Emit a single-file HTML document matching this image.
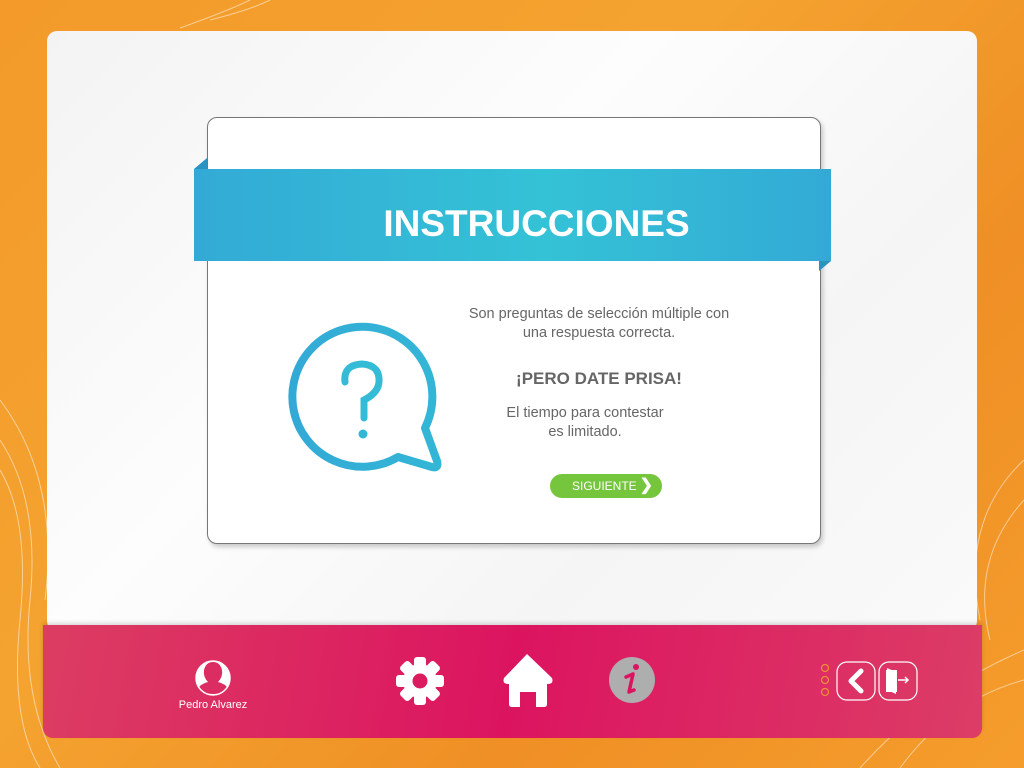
<!DOCTYPE html>
<html><head><meta charset="utf-8"><style>
body{margin:0;width:1024px;height:768px;overflow:hidden;font-family:"Liberation Sans",sans-serif;background:linear-gradient(135deg,#f39a2a 0%,#f4a330 40%,#ef8f25 70%,#f59d2c 100%);position:relative}
.panel{position:absolute;left:47px;top:31px;width:930px;height:600px;background:linear-gradient(135deg,#f3f3f3,#fdfdfd 40%,#f5f5f5 70%,#fafafa);border-radius:10px}
.card{position:absolute;left:207px;top:117px;width:612px;height:425px;background:#fff;border:1px solid #777;border-radius:10px;box-shadow:2px 3px 5px rgba(0,0,0,.2)}
.rib{position:absolute;left:194px;top:169px;width:637px;height:92px;background:linear-gradient(90deg,#33aad6,#34c2d6 55%,#33aad6);color:#fff;font-weight:bold;font-size:37px;text-align:center;line-height:110px;padding-left:48px;box-sizing:border-box}
.t{position:absolute;color:#666;text-align:center;font-size:14.5px;line-height:19px}
.foot{position:absolute;left:43px;top:625px;width:939px;height:113px;border-radius:0 0 10px 10px;background:linear-gradient(100deg,#dc3d62 0%,#dc1460 50%,#dc3d66 100%);box-shadow:0 -2px 4px rgba(0,0,0,.15)}
</style></head><body>
<svg style="position:absolute;left:0;top:0" width="1024" height="768">
<g fill="none" stroke="rgba(255,255,255,.5)" stroke-width="1">
<path d="M0 440 Q40 500 30 600 T60 768"/><path d="M0 470 Q30 520 20 620 T40 768"/><path d="M0 400 Q60 480 45 600"/>
<path d="M1024 460 Q960 520 980 620"/><path d="M1024 500 Q970 560 990 640"/><path d="M900 768 Q950 700 1024 680"/><path d="M860 768 Q930 690 1024 650"/>
<path d="M210 20 Q250 10 270 0"/><path d="M180 28 Q230 10 250 0"/>
</g></svg>
<div class="panel"></div>
<div class="card"></div>
<svg style="position:absolute;left:0;top:0" width="1024" height="768">
<polygon points="194,169 207,158 207,169" fill="#2a93bf"/>
<polygon points="819,261 831,261 819,271" fill="#2a93bf"/>
</svg>
<div class="rib">INSTRUCCIONES</div>
<svg style="position:absolute;left:0;top:0" width="1024" height="768">
<defs><linearGradient id="g" x1="0" x2="1"><stop offset="0" stop-color="#33aad6"/><stop offset="1" stop-color="#33b6d6"/></linearGradient></defs>
<path d="M398 457 A70 70 0 1 1 425 428 L437 461 Q439 469 432 467 Z" fill="none" stroke="url(#g)" stroke-width="8" stroke-linejoin="round"/>
<path d="M345 382 Q343 365 362 364 Q380 365 379 382 Q378 393 364 400 L364 418" fill="none" stroke="#34bcd6" stroke-width="7" stroke-linecap="round"/>
<circle cx="363" cy="434" r="4.5" fill="#34b6d6"/>
</svg>
<div class="t" style="left:440px;top:305px;width:318px">Son preguntas de selección múltiple con<br>una respuesta correcta.</div>
<div class="t" style="left:440px;top:369px;width:318px;font-weight:bold;font-size:17px;color:#666">¡PERO DATE PRISA!</div>
<div class="t" style="left:440px;top:404px;width:290px">El tiempo para contestar<br>es limitado.</div>
<div style="position:absolute;left:550px;top:474px;width:112px;height:24px;border-radius:12px;background:#76c63d;color:#fff;font-size:12px;line-height:24px;padding-left:22px;box-sizing:border-box">SIGUIENTE<span style="position:absolute;right:9px;top:0;font-weight:bold;font-size:16px">❯</span></div>
<div class="foot"></div>
<svg style="position:absolute;left:0;top:0" width="1024" height="768">
<circle cx="213" cy="678" r="17" fill="#fff"/>
<path d="M198 689 Q200 684 208 682 Q203 677 204 670 Q206 662 213 662 Q220 662 222 670 Q223 677 218 682 Q226 684 228 689 Q222 694 213 694 Q204 694 198 689Z" fill="#dc2d62"/>
<circle cx="213" cy="678" r="17" fill="none" stroke="#fff" stroke-width="1.5"/>
<g transform="translate(420,681)" fill="#fff">
<circle r="17"/>
<g><rect x="-6" y="-24" width="12" height="48" rx="3"/><rect x="-6" y="-24" width="12" height="48" rx="3" transform="rotate(45)"/><rect x="-6" y="-24" width="12" height="48" rx="3" transform="rotate(90)"/><rect x="-6" y="-24" width="12" height="48" rx="3" transform="rotate(135)"/></g>
<circle r="7.5" fill="#dc1a60"/></g>
<path d="M527 654 L552 678 Q554 684 548 684 L547 684 L547 704 Q547 707 544 707 L536 707 L536 692 L520 692 L520 707 L512 707 Q509 707 509 704 L509 684 L508 684 Q502 684 504 678 Z" fill="#fff"/>
<circle cx="632" cy="680" r="23" fill="#aeaeae"/>
<circle cx="636" cy="667" r="3" fill="#dc1460"/>
<path d="M626 677 L633 674 L629 692 L634 690" fill="none" stroke="#dc1460" stroke-width="3.5" stroke-linecap="round" stroke-linejoin="round"/>
<g fill="none" stroke="#f08a3a" stroke-width="1.3"><circle cx="825" cy="668" r="3.5"/><circle cx="825" cy="680" r="3.5"/><circle cx="825" cy="692" r="3.5"/></g>
<rect x="837" y="662" width="38" height="38" rx="10" fill="none" stroke="#fff" stroke-width="1.2"/>
<path d="M861 671 L851 681 L861 691" fill="none" stroke="#fff" stroke-width="5" stroke-linecap="round" stroke-linejoin="round"/>
<rect x="879" y="662" width="38" height="38" rx="10" fill="none" stroke="#fff" stroke-width="1.2"/>
<path d="M886 670 L897 670 L897 692 L886 692 Z" fill="#fff"/><path d="M887 668 L896 672 L896 694 L887 690Z" fill="#fff"/>
<path d="M898 680 L908 680 M905 677 L908 680 L905 683" stroke="#fff" stroke-width="1.5" fill="none"/>
</svg>
<div style="position:absolute;left:163px;top:699px;width:100px;text-align:center;color:#fff;font-size:11px">Pedro Alvarez</div>
</body></html>
